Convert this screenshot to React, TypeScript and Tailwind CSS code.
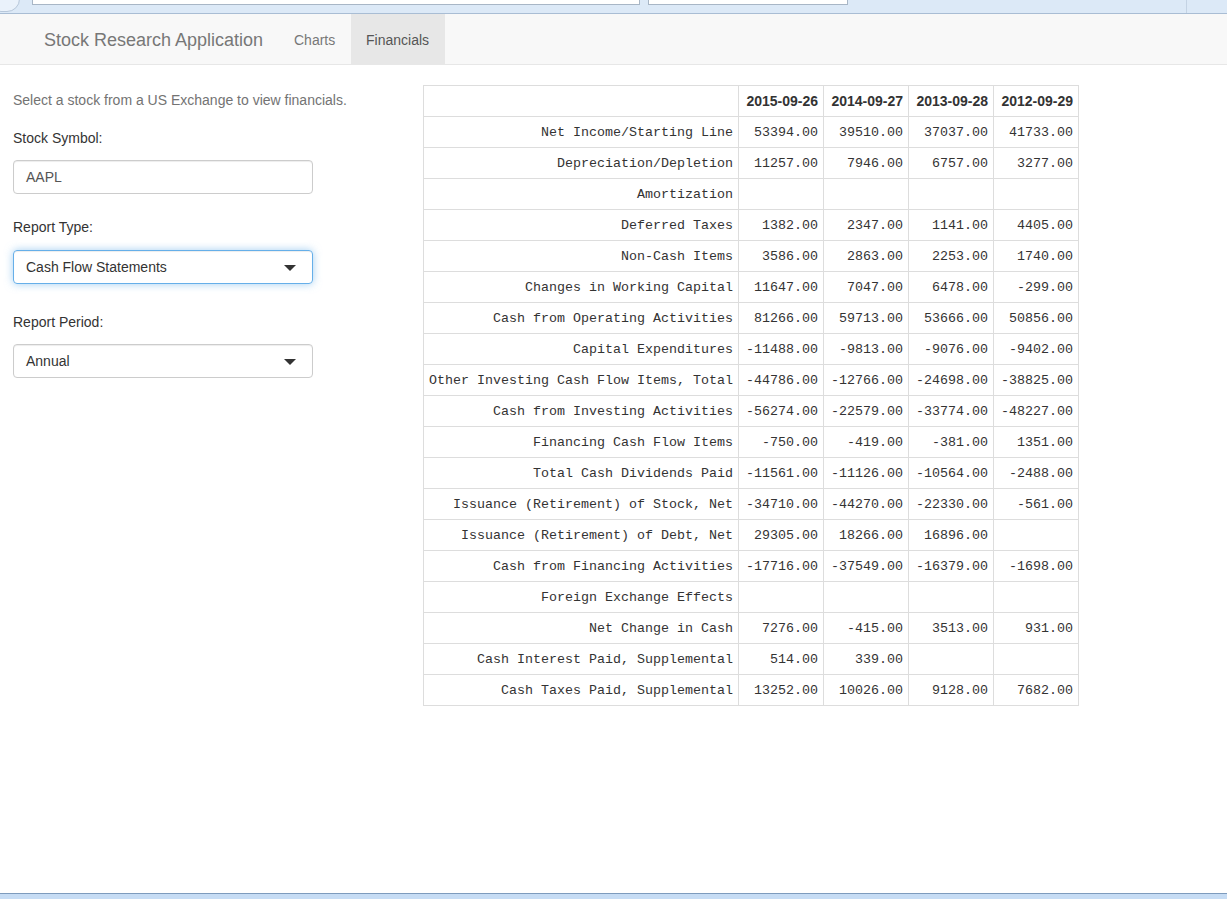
import React from 'react';

const rows: [string, string, string, string, string][] = [
  ['Net Income/Starting Line', '53394.00', '39510.00', '37037.00', '41733.00'],
  ['Depreciation/Depletion', '11257.00', '7946.00', '6757.00', '3277.00'],
  ['Amortization', '', '', '', ''],
  ['Deferred Taxes', '1382.00', '2347.00', '1141.00', '4405.00'],
  ['Non-Cash Items', '3586.00', '2863.00', '2253.00', '1740.00'],
  ['Changes in Working Capital', '11647.00', '7047.00', '6478.00', '-299.00'],
  ['Cash from Operating Activities', '81266.00', '59713.00', '53666.00', '50856.00'],
  ['Capital Expenditures', '-11488.00', '-9813.00', '-9076.00', '-9402.00'],
  ['Other Investing Cash Flow Items, Total', '-44786.00', '-12766.00', '-24698.00', '-38825.00'],
  ['Cash from Investing Activities', '-56274.00', '-22579.00', '-33774.00', '-48227.00'],
  ['Financing Cash Flow Items', '-750.00', '-419.00', '-381.00', '1351.00'],
  ['Total Cash Dividends Paid', '-11561.00', '-11126.00', '-10564.00', '-2488.00'],
  ['Issuance (Retirement) of Stock, Net', '-34710.00', '-44270.00', '-22330.00', '-561.00'],
  ['Issuance (Retirement) of Debt, Net', '29305.00', '18266.00', '16896.00', ''],
  ['Cash from Financing Activities', '-17716.00', '-37549.00', '-16379.00', '-1698.00'],
  ['Foreign Exchange Effects', '', '', '', ''],
  ['Net Change in Cash', '7276.00', '-415.00', '3513.00', '931.00'],
  ['Cash Interest Paid, Supplemental', '514.00', '339.00', '', ''],
  ['Cash Taxes Paid, Supplemental', '13252.00', '10026.00', '9128.00', '7682.00'],
];

const dates = ['2015-09-26', '2014-09-27', '2013-09-28', '2012-09-29'];

function Caret() {
  return (
    <svg width="12" height="6" viewBox="0 0 12 6" className="absolute right-[16px] top-[14px]">
      <path d="M0 0 L12 0 L6 6 Z" fill="#333" />
    </svg>
  );
}

function BrowserStrip() {
  return (
    <div className="h-[14px] bg-[#dce9f7] border-b border-[#a9bdd4] relative overflow-hidden">
      <div className="absolute left-[-12px] top-[-14px] w-[32px] h-[26px] rounded-full border border-[#b7c7da] bg-[#eaf2fb]" />
      <div className="absolute left-[32px] top-0 w-[608px] h-[5px] bg-white border border-t-0 border-[#a8b6c6]" />
      <div className="absolute left-[648px] top-0 w-[200px] h-[5px] bg-white border border-t-0 border-[#a8b6c6]" />
      <div className="absolute left-[1186px] top-0 w-px h-[13px] bg-[#c4d3e4]" />
    </div>
  );
}

export default function App() {
  return (
    <div className="h-[899px] flex flex-col bg-white font-['Liberation_Sans',Arial,sans-serif] text-[14px] text-[#333] leading-[20px] overflow-hidden">
      <BrowserStrip />

      <nav className="h-[51px] bg-[#f8f8f8] border-b border-[#e7e7e7] flex items-stretch pl-[29px]">
        <div className="w-[250px] px-[15px] pt-px flex items-center text-[18px] text-[#777] whitespace-nowrap">Stock Research Application</div>
        <div className="w-[72px] px-[15px] pt-px flex items-center text-[#777]">Charts</div>
        <div className="w-[94px] px-[15px] pt-px flex items-center bg-[#e7e7e7] text-[#555]">Financials</div>
      </nav>

      <div className="flex-1 flex items-start">
        <div className="w-[300px] ml-[13px] pt-[25px]">
          <p className="text-[#737373] whitespace-nowrap">Select a stock from a US Exchange to view financials.</p>

          <div className="mt-[18px]">Stock Symbol:</div>
          <div className="mt-[12px] h-[34px] border border-[#ccc] rounded-[4px] px-[12px] flex items-center text-[#555] shadow-[inset_0_1px_1px_rgba(0,0,0,0.075)]">
            AAPL
          </div>

          <div className="mt-[23px]">Report Type:</div>
          <div className="relative mt-[13px] h-[34px] border border-[#66afe9] rounded-[4px] px-[12px] flex items-center text-[#333] shadow-[inset_0_1px_1px_rgba(0,0,0,0.075),0_0_8px_rgba(102,175,233,0.6)]">
            Cash Flow Statements
            <Caret />
          </div>

          <div className="mt-[28px]">Report Period:</div>
          <div className="relative mt-[12px] h-[34px] border border-[#ccc] rounded-[4px] px-[12px] flex items-center text-[#333] shadow-[inset_0_1px_1px_rgba(0,0,0,0.075)]">
            Annual
            <Caret />
          </div>
        </div>

        <table className="ml-[110px] mt-[20px] border-collapse table-fixed">
          <colgroup>
            <col className="w-[315px]" />
            <col className="w-[85px]" />
            <col className="w-[85px]" />
            <col className="w-[85px]" />
            <col className="w-[85px]" />
          </colgroup>
          <thead>
            <tr>
              <th className="border border-[#ddd] px-[5px] py-[5px] h-[31px]" />
              {dates.map((d) => (
                <th key={d} className="border border-[#ddd] px-[5px] py-[5px] h-[31px] text-right font-bold whitespace-nowrap">
                  {d}
                </th>
              ))}
            </tr>
          </thead>
          <tbody className="font-['Liberation_Mono','Courier_New',monospace] text-[13.33px]">
            {rows.map((r) => (
              <tr key={r[0]}>
                {r.map((c, i) => (
                  <td key={i} className="border border-[#ddd] px-[5px] pt-[6px] pb-[4px] h-[31px] text-right whitespace-nowrap text-[#333]">
                    {c}
                  </td>
                ))}
              </tr>
            ))}
          </tbody>
        </table>
      </div>

      <div className="h-[6px] bg-[#c6dcf4] border-t border-[#7d9bbd]" />
    </div>
  );
}
